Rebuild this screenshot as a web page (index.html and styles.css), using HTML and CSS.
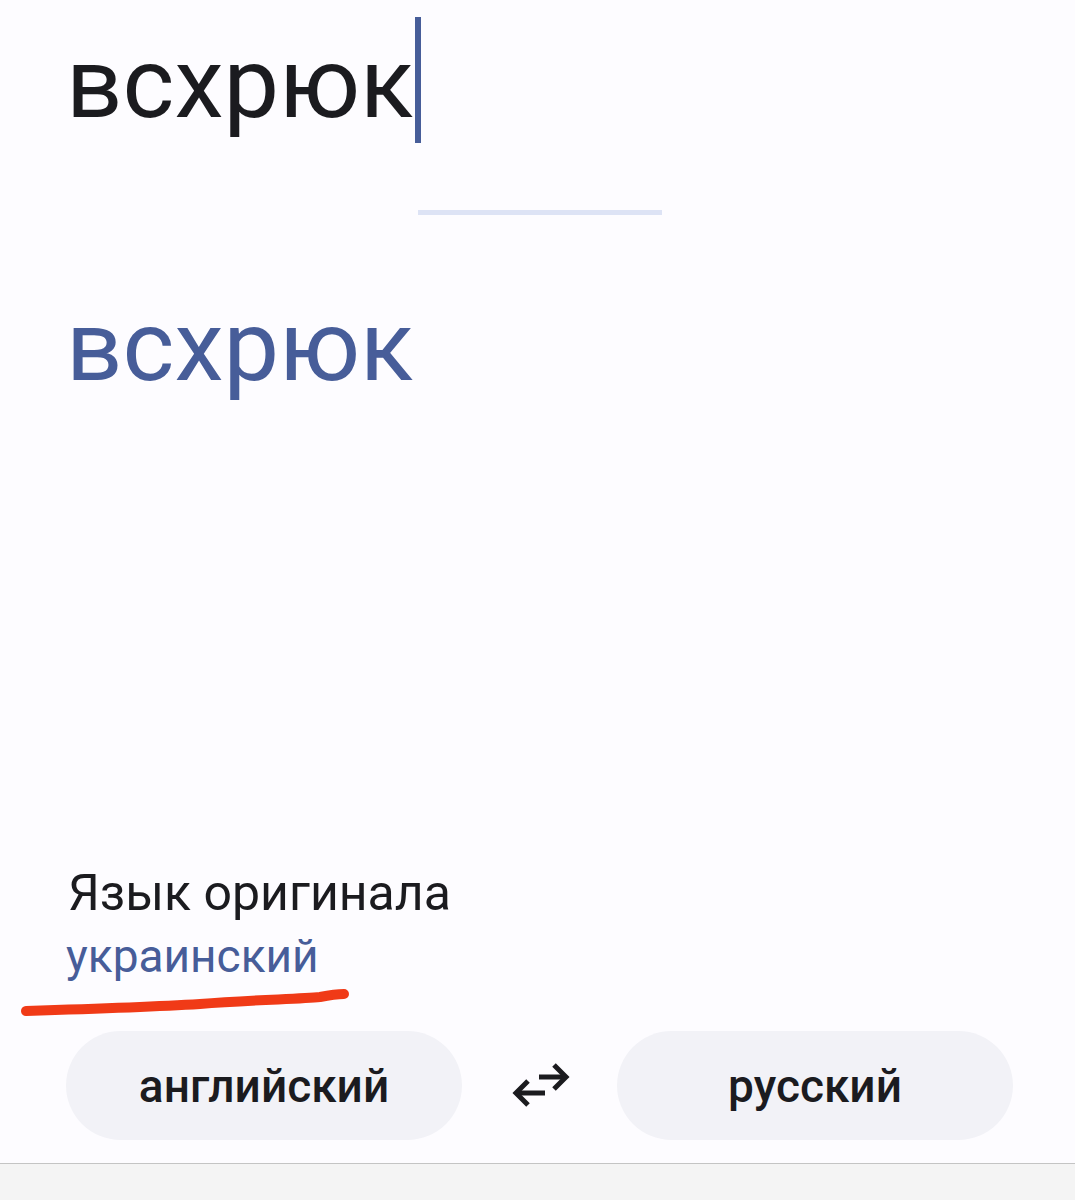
FILE: index.html
```html
<!DOCTYPE html>
<html lang="ru">
<head>
<meta charset="utf-8">
<title>Переводчик</title>
<link rel="stylesheet" href="styles.css">
</head>
<body>
<div class="page">
  <div class="source">
    <span class="source-text">всхрюк</span><span class="caret"></span>
  </div>
  <div class="divider"></div>
  <div class="result">всхрюк</div>

  <div class="lower">
    <div class="detect-label">Язык оригинала</div>
    <div class="detect-lang">украинский</div>
    <div class="lang-row">
      <button class="pill">английский</button>
      <div class="swap">
        <svg width="64" height="56" viewBox="0 0 64 56" fill="none" stroke="#1b1b1f" stroke-width="5">
          <path d="M32 19H59"/>
          <path d="M47 7L59 19L47 31"/>
          <path d="M38 35H11"/>
          <path d="M21 23L9 35L21 47"/>
        </svg>
      </div>
      <button class="pill">русский</button>
    </div>
    <div class="bottom-bar"></div>
  </div>

  <svg class="scribble" width="380" height="40" viewBox="0 0 380 40" fill="none">
    <path d="M26 33 C90 31 150 29 200 26 C250 22 300 21 320 19 C330 17 338 16 344 16" stroke="#f03a17" stroke-width="10" stroke-linecap="round"/>
  </svg>
</div>
</body>
</html>
```

FILE: styles.css
```css
html, body {
  margin: 0;
  padding: 0;
}
body {
  background: #fdfcff;
  font-family: Roboto, "Noto Sans", "Liberation Sans", sans-serif;
}
.page {
  position: relative;
  height: 1200px;
  display: flex;
  flex-direction: column;
  overflow: hidden;
}
.source {
  display: flex;
  align-items: flex-start;
  padding-left: 66px;
  padding-top: 17px;
}
.source-text {
  font-size: 99px;
  line-height: 126px;
  color: #1b1b1f;
  margin-top: 3px;
}
.caret {
  display: inline-block;
  width: 6px;
  height: 126px;
  background: #475d99;
  margin-left: 2px;
}
.divider {
  align-self: center;
  width: 244px;
  height: 5px;
  background: #dde3f5;
  margin-top: 64px;
  margin-left: 4px;
}
.result {
  margin-top: 68px;
  padding-left: 66px;
  font-size: 99px;
  line-height: 126px;
  color: #475d99;
}
.lower {
  margin-top: auto;
  display: flex;
  flex-direction: column;
}
.detect-label {
  padding-left: 68px;
  font-size: 50px;
  line-height: 56px;
  color: #1b1b1f;
}
.detect-lang {
  margin-top: 7px;
  padding-left: 66px;
  font-size: 46px;
  line-height: 56px;
  color: #475d99;
}
.lang-row {
  margin-top: 47px;
  display: flex;
  align-items: center;
  padding-left: 66px;
}
.pill {
  width: 396px;
  height: 109px;
  border: none;
  border-radius: 55px;
  background: #f2f2f7;
  font-family: Roboto, "Noto Sans", "Liberation Sans", sans-serif;
  font-weight: 500;
  font-size: 46px;
  color: #1b1b1f;
  padding: 0;
}
.swap {
  width: 155px;
  display: flex;
  justify-content: center;
  align-items: center;
}
.swap svg {
  display: block;
  margin-left: -2px;
}
.bottom-bar {
  margin-top: 23px;
  height: 36px;
  border-top: 1px solid #c4c4c4;
  background: #f4f4f4;
}
.scribble {
  position: absolute;
  left: 0;
  top: 978px;
}
```
